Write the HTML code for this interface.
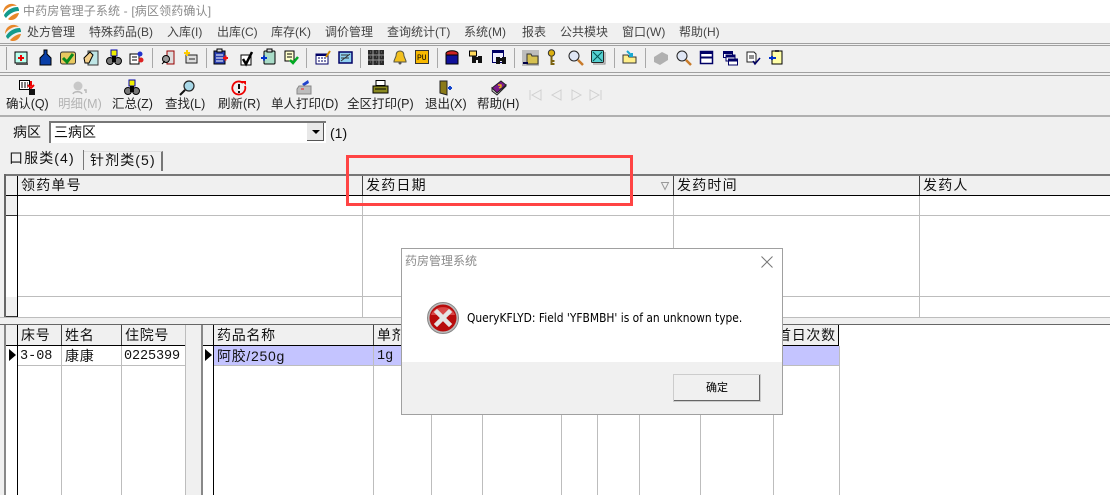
<!DOCTYPE html>
<html lang="zh-CN"><head><meta charset="utf-8"><title>中药房管理子系统</title>
<style>
html,body{margin:0;padding:0;width:1110px;height:495px;overflow:hidden;background:#f0f0f0}
body{position:relative;font-family:"Liberation Sans","WenQuanYi Zen Hei","Noto Sans CJK SC",sans-serif;color:#111}
.t{position:absolute;white-space:nowrap;line-height:16px;height:16px}
.r{position:absolute}
svg{position:absolute;overflow:visible}
.m{font-size:12px;top:24px;color:#444}
.b{font-size:12.5px;top:96px;color:#222}
.g{font-size:14px;color:#111}
.s{position:absolute;top:48px;width:1px;height:20px;background:#a8a8a8}
</style></head><body>
<div class="r" style="left:0;top:0;width:1110px;height:23px;background:#fff"></div>
<svg style="left:2px;top:3px" width="18" height="18" viewBox="0 0 18 18"><path d="M1 10C1 4 6 0 11 1c2 .4 3 1 4 2C10 2 4 5 1 10Z" fill="#e8872a"/><path d="M2 12C5 7 10 4 16 4c1 2 1 3 1 4C12 8 7 11 4 15c-1-1-2-2-2-3Z" fill="#139a8c"/><path d="M6 16c3-3 7-6 11-6-1 4-4 7-8 7-1 0-2 0-3-1Z" fill="#e8872a"/></svg>
<div class="t" style="left:23px;top:3px;font-size:12px;color:#8a8a8a;letter-spacing:.15px">中药房管理子系统 - [病区领药确认]</div>
<svg style="left:4px;top:24px" width="18" height="18" viewBox="0 0 18 18"><path d="M1 10C1 4 6 0 11 1c2 .4 3 1 4 2C10 2 4 5 1 10Z" fill="#e8872a"/><path d="M2 12C5 7 10 4 16 4c1 2 1 3 1 4C12 8 7 11 4 15c-1-1-2-2-2-3Z" fill="#139a8c"/><path d="M6 16c3-3 7-6 11-6-1 4-4 7-8 7-1 0-2 0-3-1Z" fill="#e8872a"/></svg>
<div class="t m" style="left:27px">处方管理</div><div class="t m" style="left:89px">特殊药品(B)</div><div class="t m" style="left:167px">入库(I)</div><div class="t m" style="left:217px">出库(C)</div><div class="t m" style="left:271px">库存(K)</div><div class="t m" style="left:325px">调价管理</div><div class="t m" style="left:387px">查询统计(T)</div><div class="t m" style="left:464px">系统(M)</div><div class="t m" style="left:522px">报表</div><div class="t m" style="left:560px">公共模块</div><div class="t m" style="left:622px">窗口(W)</div><div class="t m" style="left:679px">帮助(H)</div>

<div class="r" style="left:0;top:43px;width:1110px;height:1px;background:#a0a0a0"></div>
<div class="r" style="left:0;top:45px;width:1110px;height:1px;background:#a0a0a0"></div>
<div class="r" style="left:0;top:72px;width:1110px;height:1px;background:#a0a0a0"></div>
<div class="r" style="left:0;top:75px;width:1110px;height:1px;background:#a0a0a0"></div>
<div class="r" style="left:6px;top:47px;width:1px;height:23px;background:#a0a0a0"></div>
<div class="s" style="left:152px"></div><div class="s" style="left:206px"></div><div class="s" style="left:306px"></div><div class="s" style="left:360px"></div><div class="s" style="left:437px"></div><div class="s" style="left:514px"></div><div class="s" style="left:614px"></div><div class="s" style="left:645px"></div>

<!-- top toolbar icons -->
<svg style="left:14px;top:50px" width="15" height="15"><rect x="1" y="2" width="12" height="11" fill="#bfe" stroke="#000"/><path d="M4 8h6M7 5v6" stroke="#e00" stroke-width="2"/><rect x="2" y="13" width="12" height="2" fill="#555"/></svg>
<svg style="left:39px;top:49px" width="13" height="17"><path d="M5 1h3v4l4 4v7H1V9l4-4Z" fill="#0a3fa8" stroke="#000"/></svg>
<svg style="left:60px;top:50px" width="16" height="15"><rect x="0.500" y="2" width="15" height="12" rx="2" fill="#e8c860" stroke="#333"/><path d="M3 8l4 4 6-8" stroke="#0a8a1a" stroke-width="3" fill="none"/></svg>
<svg style="left:83px;top:50px" width="16" height="16"><path d="M5 1h10v14H5Z" fill="#bfe6e6" stroke="#333"/><path d="M1 8l6-6 3 3-4 8H2Z" fill="#f4d08a" stroke="#000"/></svg>
<svg style="left:106px;top:50px" width="16" height="15"><rect x="5" y="0" width="6" height="6" fill="#ee0" stroke="#00a"/><circle cx="4" cy="11" r="3.500" fill="#777" stroke="#000"/><circle cx="12" cy="11" r="3.500" fill="#777" stroke="#000"/><rect x="6" y="6" width="4" height="6" fill="#000"/></svg>
<svg style="left:129px;top:50px" width="15" height="15"><rect x="1" y="4" width="9" height="10" fill="#fff" stroke="#000"/><path d="M3 7h5M3 10h5" stroke="#000"/><circle cx="11" cy="4" r="2.500" fill="#23c"/><circle cx="12" cy="10" r="2.500" fill="#d22"/></svg>
<svg style="left:161px;top:50px" width="14" height="15"><rect x="6" y="1" width="7" height="13" fill="#ddd" stroke="#900"/><circle cx="5" cy="9" r="3.500" fill="#999" stroke="#000"/><path d="M1 14l3-3" stroke="#000"/></svg>
<svg style="left:183px;top:50px" width="15" height="14"><rect x="3" y="5" width="11" height="8" fill="#ddd" stroke="#222"/><path d="M4 0v6M1 3h6" stroke="#fc0" stroke-width="2"/><path d="M6 9h6" stroke="#222"/></svg>
<svg style="left:213px;top:49px" width="16" height="16"><rect x="1" y="2" width="11" height="13" fill="#2a3fb0" stroke="#000"/><rect x="4" y="0" width="5" height="3" fill="#ddd" stroke="#000"/><path d="M3 6h7M3 9h7M3 12h7" stroke="#fff"/><path d="M10 9h5M12.500 6.500v5" stroke="#e11" stroke-width="2"/></svg>
<svg style="left:240px;top:51px" width="14" height="15"><rect x="1" y="4" width="10" height="10" fill="#fff" stroke="#000"/><path d="M3 8l3 5 6-12" stroke="#000" stroke-width="2.500" fill="none"/></svg>
<svg style="left:261px;top:49px" width="15" height="16"><rect x="3" y="2" width="11" height="13" rx="1" fill="#a9dcc8" stroke="#000"/><rect x="6" y="0" width="5" height="3" fill="#ddd" stroke="#000"/><path d="M0 9h6M3 6.500v5" stroke="#03c" stroke-width="2"/></svg>
<svg style="left:284px;top:50px" width="15" height="15"><rect x="1" y="1" width="9" height="10" fill="#ffc" stroke="#000"/><path d="M3 4h5M3 7h5" stroke="#000"/><path d="M6 10l3 3 5-6" stroke="#0a2" stroke-width="2.500" fill="none"/></svg>
<svg style="left:315px;top:50px" width="16" height="15"><rect x="1" y="4" width="12" height="10" fill="#fff" stroke="#006"/><rect x="1" y="4" width="12" height="2" fill="#006"/><path d="M3 8h8M3 11h8" stroke="#006" stroke-dasharray="2 1"/><path d="M11 7l4-6" stroke="#c80" stroke-width="2"/></svg>
<svg style="left:338px;top:51px" width="15" height="13"><rect x="1" y="1" width="13" height="11" fill="#8fd0f0" stroke="#006" stroke-width="1.500"/><path d="M3 10l9-7M3 4h8M3 7h8" stroke="#333"/></svg>
<svg style="left:368px;top:50px" width="16" height="15"><rect width="16" height="15" fill="#2a2a2a"/><path d="M0 5h16M0 10h16M5 0v15M11 0v15" stroke="#999"/><path d="M2 2h1M8 2h1M13 2h1M2 7h1M8 7h1M13 7h1M2 12h1M8 12h1M13 12h1" stroke="#777"/></svg>
<svg style="left:393px;top:51px" width="14" height="14"><path d="M7 0c3 0 4 2 4 5l2 5v1H1v-1l2-5c0-3 1-5 4-5Z" fill="#f2c01e" stroke="#554"/><circle cx="7" cy="12" r="1.500" fill="#555"/></svg>
<svg style="left:415px;top:50px" width="15" height="15"><rect x="0.500" y="0.500" width="13" height="13" fill="#f7b800" stroke="#333"/><text x="2" y="10" font-size="8" font-family="Liberation Mono" fill="#000">PU</text></svg>
<svg style="left:445px;top:49px" width="14" height="16"><rect x="1" y="5" width="12" height="10" fill="#10109a" stroke="#000"/><path d="M1 4c2-3 10-3 12 0v2H1Z" fill="#c22" stroke="#000"/></svg>
<svg style="left:469px;top:50px" width="14" height="14"><rect x="0.500" y="1" width="7" height="5" fill="#ffd95a" stroke="#000"/><rect x="3" y="6" width="4" height="7" fill="#111"/><rect x="9" y="6" width="4" height="7" fill="#111"/><rect x="5" y="7" width="6" height="3" fill="#111"/></svg>
<svg style="left:492px;top:50px" width="15" height="15"><rect x="0.500" y="0.500" width="11" height="12" fill="#eef" stroke="#006"/><rect x="1" y="1" width="11" height="2" fill="#006"/><rect x="4" y="7" width="4" height="7" fill="#111"/><rect x="10" y="7" width="4" height="7" fill="#111"/><rect x="6" y="8" width="6" height="3" fill="#111"/></svg>
<svg style="left:522px;top:50px" width="17" height="16"><rect width="17" height="16" fill="#bdbdbd"/><path d="M5 4h4l1 2h6v8H5Z" fill="#d6c050" stroke="#333"/><path d="M1 13h5" stroke="#004" stroke-width="2"/></svg>
<svg style="left:547px;top:49px" width="9" height="17"><circle cx="4.500" cy="4" r="3.200" fill="#dcb010" stroke="#333"/><path d="M4.500 7v9M4.500 12h3M4.500 15h3" stroke="#7a6210" stroke-width="2"/></svg>
<svg style="left:568px;top:50px" width="16" height="16"><circle cx="6" cy="6" r="5" fill="#dfe6f4" stroke="#222"/><path d="M10 10l5 5" stroke="#c87a2a" stroke-width="2.500"/></svg>
<svg style="left:591px;top:50px" width="15" height="15"><rect x="0.500" y="0.500" width="12" height="12" rx="1" fill="#56d0d0" stroke="#222"/><path d="M2 2l9 9M11 2l-9 9" stroke="#055"/><path d="M14 2v12H2" stroke="#888" fill="none"/></svg>
<svg style="left:622px;top:50px" width="15" height="14"><path d="M1 5h5l1 2h7v6H1Z" fill="#ffef8a" stroke="#333"/><path d="M5 1l5 5M10 3v3H7" stroke="#18a8d0" stroke-width="2" fill="none"/></svg>
<svg style="left:653px;top:51px" width="16" height="14"><path d="M1 6l8-5 6 3v5l-8 5-6-3Z" fill="#b0b0b0"/></svg>
<svg style="left:676px;top:50px" width="16" height="16"><circle cx="6" cy="6" r="5" fill="#dfe6f4" stroke="#222"/><path d="M10 10l5 5" stroke="#c87a2a" stroke-width="2.500"/></svg>
<svg style="left:700px;top:51px" width="13" height="13"><rect x="0.500" y="0.500" width="12" height="12" fill="#fff" stroke="#006" stroke-width="1.500"/><rect x="0" y="0" width="13" height="3" fill="#006"/><rect x="0" y="5.500" width="13" height="2" fill="#006"/></svg>
<svg style="left:723px;top:51px" width="15" height="15"><g fill="#fff" stroke="#006"><rect x="0.500" y="0.500" width="9" height="6"/><rect x="3" y="4" width="9" height="6"/><rect x="5.500" y="8" width="9" height="6"/></g><path d="M1 2h8M3 5.500h9M6 9.500h8" stroke="#006" stroke-width="2"/></svg>
<svg style="left:746px;top:51px" width="15" height="14"><path d="M1 1h7l2 2v8H1Z" fill="#fff" stroke="#222"/><path d="M3 5h5M3 7h5" stroke="#222"/><path d="M7 10l2 3 5-6" stroke="#006" stroke-width="1.500" fill="none"/></svg>
<svg style="left:769px;top:50px" width="15" height="15"><rect x="3" y="1" width="10" height="13" fill="#ffffa8" stroke="#000"/><rect x="6" y="0" width="4" height="2" fill="#333"/><path d="M0 8h7M3 6v4" stroke="#03c" stroke-width="2"/></svg>

<!-- second toolbar icons -->
<svg style="left:19px;top:80px" width="17" height="16"><rect x="0.500" y="0.500" width="10" height="9" fill="#fff" stroke="#000"/><path d="M2 3h7M2 5h7M2 7h7" stroke="#000" stroke-dasharray="2 1"/><path d="M12 1v5M9 5l3 3 3-3" stroke="#e00" stroke-width="2" fill="none"/><rect x="10" y="9" width="6" height="6" fill="#111"/></svg>
<svg style="left:72px;top:81px" width="15" height="14"><circle cx="6" cy="5" r="4.500" fill="#c8c8c8"/><path d="M1 13c1-3 8-3 9 0M12 9h2v3" stroke="#b8b8b8" stroke-width="1.500" fill="none"/></svg>
<svg style="left:124px;top:80px" width="16" height="15"><rect x="5" y="0" width="6" height="6" fill="#ee0" stroke="#00a"/><circle cx="4" cy="11" r="3.500" fill="#777" stroke="#000"/><circle cx="12" cy="11" r="3.500" fill="#777" stroke="#000"/><rect x="6" y="6" width="4" height="6" fill="#000"/></svg>
<svg style="left:179px;top:80px" width="16" height="16"><circle cx="10" cy="6" r="5" fill="#a8d8e8" stroke="#222" stroke-width="1.200"/><path d="M6 10l-5 5" stroke="#111" stroke-width="2"/></svg>
<svg style="left:231px;top:80px" width="16" height="16"><path d="M12 3a6.500 6.500 0 1 0 2 3" fill="none" stroke="#e00" stroke-width="1.800"/><path d="M10 1h5v4Z" fill="#e00"/><path d="M8 4v5M8 11v2" stroke="#111" stroke-width="2"/></svg>
<svg style="left:296px;top:80px" width="16" height="15"><path d="M6 4l6-4 1 3-5 3Z" fill="#24c"/><path d="M3 6h12v8H1V9Z" fill="#bdbdbd" stroke="#888"/><path d="M5 9h3" stroke="#e22"/></svg>
<svg style="left:372px;top:80px" width="17" height="15"><rect x="4" y="0.500" width="9" height="5" fill="#fff" stroke="#000"/><path d="M1 6h15v7H1Z" fill="#8a8a20" stroke="#000"/><path d="M3 9h11" stroke="#000"/></svg>
<svg style="left:439px;top:80px" width="14" height="16"><path d="M1 1h7v14l-7-2Z" fill="#8a7a18" stroke="#222"/><path d="M9 8h4M11 6v4" stroke="#14c" stroke-width="2"/></svg>
<svg style="left:491px;top:80px" width="16" height="16"><path d="M1 8l9-7 5 4-9 8Z" fill="#7a1a8a" stroke="#222"/><path d="M1 8v3l5 4 9-9V5l-9 8Z" fill="#ddd" stroke="#222"/><path d="M7 5h3v2l-2 1" stroke="#fc0" stroke-width="1.200" fill="none"/></svg>
<svg style="left:529px;top:89px" width="74" height="12" fill="none" stroke="#d0d0d0"><path d="M1 1v10M12 1L3 6l9 5ZM32 1L23 6l9 5ZM43 1l9 5-9 5ZM72 1v10M61 1l9 5-9 5Z"/></svg>

<div class="t b" style="left:6px;letter-spacing:-.1px">确认(Q)</div><div class="t b" style="left:58px;color:#b4b4b4">明细(M)</div><div class="t b" style="left:112px">汇总(Z)</div><div class="t b" style="left:165px">查找(L)</div><div class="t b" style="left:218px">刷新(R)</div><div class="t b" style="left:271px">单人打印(D)</div><div class="t b" style="left:347px">全区打印(P)</div><div class="t b" style="left:425px">退出(X)</div><div class="t b" style="left:477px">帮助(H)</div>

<div class="r" style="left:0;top:115px;width:1110px;height:2px;background:#b0b0b0"></div>
<div class="t g" style="left:13px;top:124px;font-size:14px">病区</div>
<div class="r" style="left:49px;top:121px;width:277px;height:22px;background:#fff;border-top:2px solid #777;border-left:2px solid #777;box-sizing:border-box"></div>
<div class="t g" style="left:54px;top:124px">三病区</div>
<div class="r" style="left:307px;top:123px;width:17px;height:18px;background:#e8e8e8;border-right:1px solid #555;border-bottom:1px solid #555;box-sizing:border-box"></div>
<div class="r" style="left:312px;top:130px;width:0;height:0;border-left:4px solid transparent;border-right:4px solid transparent;border-top:4px solid #000"></div>
<div class="t g" style="left:330px;top:125px">(1)</div>

<!-- tabs -->
<div class="r" style="left:84px;top:151px;width:79px;height:20px;border-right:2px solid #777;border-top:1px solid #ddd;box-sizing:border-box"></div>
<div class="r" style="left:83px;top:150px;width:1px;height:20px;background:#777"></div>
<div class="t g" style="left:9px;top:150px;letter-spacing:1.1px">口服类(4)</div>
<div class="t g" style="left:90px;top:152px;letter-spacing:1.1px">针剂类(5)</div>

<!-- upper grid -->
<div class="r" style="left:4px;top:174px;width:1106px;height:144px;background:#fff"></div>
<div class="r" style="left:4px;top:174px;width:1106px;height:22px;background:#f0f0f0;border-top:2px solid #777;border-bottom:1px solid #000;box-sizing:border-box"></div>
<div class="r" style="left:4px;top:174px;width:2px;height:144px;background:#666"></div>
<div class="r" style="left:6px;top:196px;width:11px;height:20px;background:#f0f0f0;border-bottom:1px solid #333;box-sizing:border-box"></div>
<div class="r" style="left:6px;top:297px;width:11px;height:20px;background:#f0f0f0;border-bottom:1px solid #333;box-sizing:border-box"></div>
<div class="r" style="left:17px;top:176px;width:1px;height:141px;background:#000"></div>
<div class="r" style="left:18px;top:215px;width:1092px;height:1px;background:#bdbdbd"></div>
<div class="r" style="left:18px;top:296px;width:1092px;height:1px;background:#bdbdbd"></div>
<div class="r" style="left:362px;top:176px;width:1px;height:19px;background:#444"></div><div class="r" style="left:362px;top:196px;width:1px;height:121px;background:#bdbdbd"></div>
<div class="r" style="left:673px;top:176px;width:1px;height:19px;background:#444"></div><div class="r" style="left:673px;top:196px;width:1px;height:121px;background:#bdbdbd"></div>
<div class="r" style="left:919px;top:176px;width:1px;height:19px;background:#444"></div><div class="r" style="left:919px;top:196px;width:1px;height:121px;background:#bdbdbd"></div>
<div class="t g" style="left:21px;top:177px;letter-spacing:1.2px">领药单号</div>
<div class="t g" style="left:366px;top:177px;letter-spacing:1.2px">发药日期</div>
<div class="t g" style="left:677px;top:177px;letter-spacing:1.2px">发药时间</div>
<div class="t g" style="left:923px;top:177px;letter-spacing:1.2px">发药人</div>
<svg style="left:661px;top:182px" width="8" height="8"><path d="M.5.500h7l-3.500 7Z" fill="none" stroke="#999"/></svg>

<!-- band -->
<div class="r" style="left:0;top:317px;width:1110px;height:1px;background:#bdbdbd"></div>
<div class="r" style="left:0;top:324px;width:1110px;height:1px;background:#666"></div>

<!-- left lower grid -->
<div class="r" style="left:5px;top:325px;width:181px;height:170px;background:#fff"></div>
<div class="r" style="left:5px;top:325px;width:181px;height:21px;background:#f0f0f0;border-bottom:1px solid #000;box-sizing:border-box"></div>
<div class="r" style="left:4px;top:325px;width:2px;height:170px;background:#888"></div>
<div class="r" style="left:17px;top:325px;width:1px;height:170px;background:#000"></div>
<div class="r" style="left:61px;top:325px;width:1px;height:20px;background:#444"></div><div class="r" style="left:61px;top:346px;width:1px;height:149px;background:#bdbdbd"></div>
<div class="r" style="left:121px;top:325px;width:1px;height:20px;background:#444"></div><div class="r" style="left:121px;top:346px;width:1px;height:149px;background:#bdbdbd"></div>
<div class="r" style="left:185px;top:325px;width:1px;height:170px;background:#bdbdbd"></div>
<div class="r" style="left:18px;top:365px;width:168px;height:1px;background:#bdbdbd"></div>
<div class="r" style="left:9px;top:349px;width:0;height:0;border-top:6px solid transparent;border-bottom:6px solid transparent;border-left:7px solid #000"></div>
<div class="t g" style="left:21px;top:327px;letter-spacing:.7px">床号</div><div class="t g" style="left:65px;top:327px;letter-spacing:.7px">姓名</div><div class="t g" style="left:125px;top:327px;letter-spacing:.7px">住院号</div>
<div class="t" style="left:20px;top:349px;font-size:13.500px;font-family:'Liberation Mono',monospace">3-08</div><div class="t g" style="left:65px;top:348px;letter-spacing:.7px">康康</div><div class="t" style="left:124px;top:349px;font-size:13.500px;font-family:'Liberation Mono',monospace;letter-spacing:-.1px">0225399</div>

<!-- right lower grid -->
<div class="r" style="left:201px;top:325px;width:909px;height:170px;background:#fff"></div>
<div class="r" style="left:201px;top:325px;width:638px;height:21px;background:#f0f0f0;border-bottom:1px solid #000;border-right:1px solid #000;box-sizing:border-box"></div>
<div class="r" style="left:201px;top:325px;width:2px;height:170px;background:#888"></div>
<div class="r" style="left:214px;top:346px;width:625px;height:19px;background:#c4c4ff"></div>
<div class="r" style="left:214px;top:365px;width:625px;height:1px;background:#bdbdbd"></div>
<div class="r" style="left:213px;top:325px;width:1px;height:170px;background:#000"></div>
<div class="r" style="left:373px;top:325px;width:1px;height:20px;background:#444"></div><div class="r" style="left:373px;top:346px;width:1px;height:149px;background:#bdbdbd"></div>
<div class="r" style="left:431px;top:366px;width:1px;height:129px;background:#bdbdbd"></div>
<div class="r" style="left:482px;top:366px;width:1px;height:129px;background:#bdbdbd"></div>
<div class="r" style="left:561px;top:366px;width:1px;height:129px;background:#bdbdbd"></div>
<div class="r" style="left:597px;top:366px;width:1px;height:129px;background:#bdbdbd"></div>
<div class="r" style="left:639px;top:366px;width:1px;height:129px;background:#bdbdbd"></div>
<div class="r" style="left:700px;top:366px;width:1px;height:129px;background:#bdbdbd"></div>
<div class="r" style="left:773px;top:366px;width:1px;height:129px;background:#bdbdbd"></div>
<div class="r" style="left:839px;top:346px;width:1px;height:149px;background:#bdbdbd"></div>
<div class="r" style="left:205px;top:349px;width:0;height:0;border-top:6px solid transparent;border-bottom:6px solid transparent;border-left:7px solid #000"></div>
<div class="t g" style="left:217px;top:327px;letter-spacing:.7px">药品名称</div><div class="t g" style="left:377px;top:327px;letter-spacing:.7px">单剂量</div><div class="t g" style="left:777px;top:327px;letter-spacing:.7px">首日次数</div>
<div class="t g" style="left:217px;top:348px;letter-spacing:.7px">阿胶/250g</div><div class="t" style="left:377px;top:349px;font-size:13.500px;font-family:'Liberation Mono',monospace">1g</div>

<!-- red annotation -->
<div class="r" style="left:346px;top:155px;width:287px;height:51px;border:3px solid #ff4444;box-sizing:border-box"></div>

<!-- dialog -->
<div class="r" style="left:401px;top:248px;width:382px;height:167px;background:#fff;border:1px solid #a0a0a0;box-sizing:border-box"></div>
<div class="r" style="left:402px;top:362px;width:380px;height:52px;background:#f0f0f0"></div>
<div class="t" style="left:405px;top:253px;font-size:12px;color:#8a8a8a">药房管理系统</div>
<svg style="left:761px;top:256px" width="12" height="12"><path d="M.5.500l11 11M11.500.500l-11 11" stroke="#777" fill="none"/></svg>
<svg style="left:427px;top:302px" width="32" height="32" viewBox="0 0 32 32"><circle cx="16" cy="16" r="15.500" fill="#bbb" stroke="#888"/><circle cx="16" cy="16" r="13.500" fill="#b80c0c"/><path d="M4 13a12.500 11 0 0 1 24 0Z" fill="#d84848"/><path d="M10 10l12 12M22 10L10 22" stroke="#e4e4e4" stroke-width="4.500" stroke-linecap="square"/></svg>
<div class="t" style="left:467px;top:310px;font-size:12px;color:#000;font-family:'DejaVu Sans',sans-serif;transform-origin:0 50%;transform:scaleX(.89)">QueryKFLYD: Field 'YFBMBH' is of an unknown type.</div>
<div class="r" style="left:673px;top:374px;width:88px;height:28px;background:#f0f0f0;border-top:1px solid #fff;border-left:1px solid #fff;border-right:2px solid #666;border-bottom:2px solid #666;box-sizing:border-box;outline:1px solid #ccc;outline-offset:-1px"></div>
<div class="t" style="left:706px;top:380px;font-size:11px;color:#000">确定</div>
</body></html>
